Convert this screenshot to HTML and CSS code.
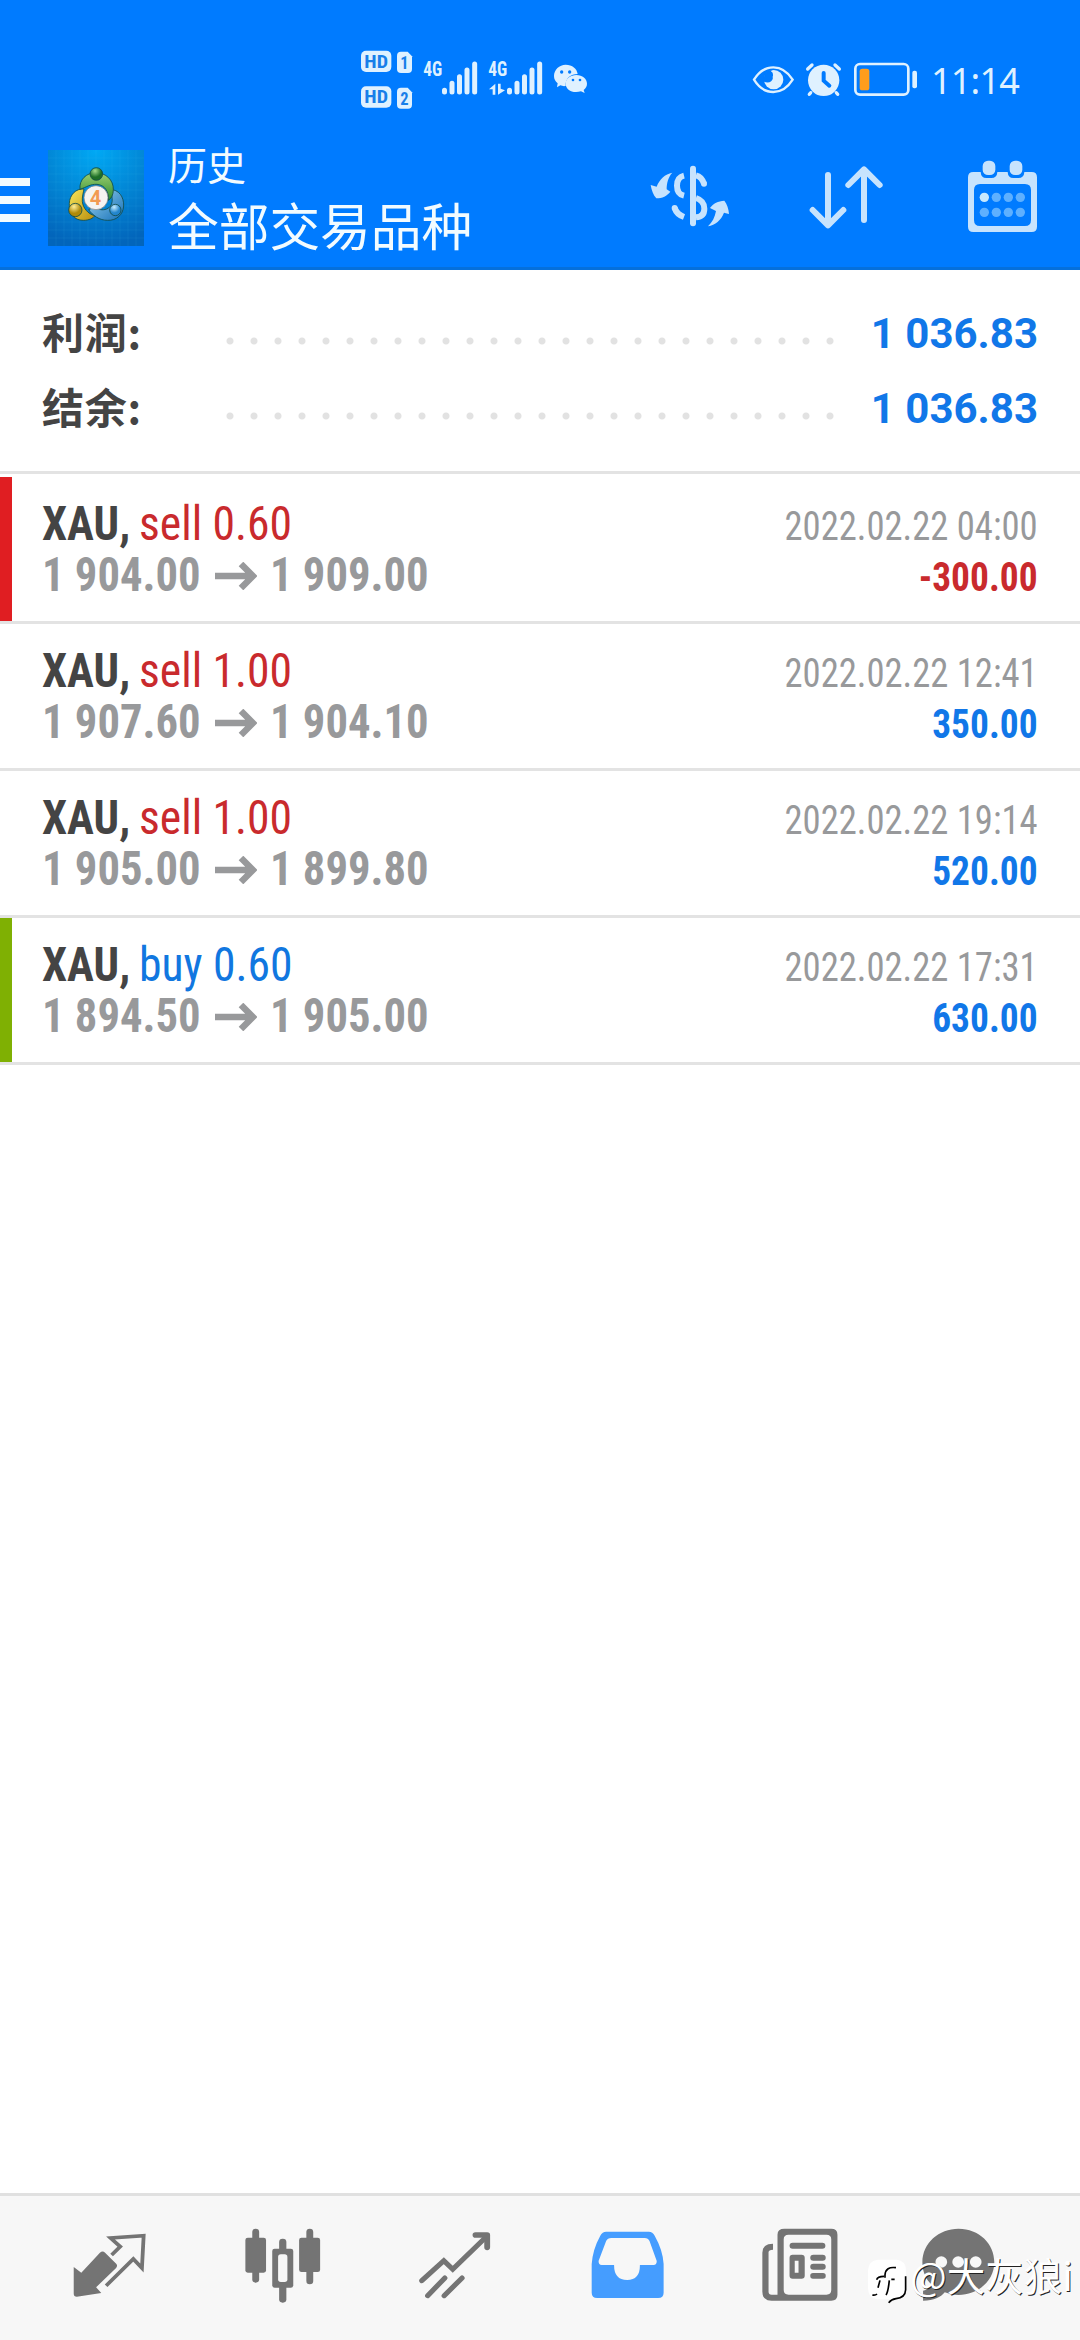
FILE: index.html
```html
<!DOCTYPE html>
<html lang="zh-CN">
<head>
<meta charset="utf-8">
<title>历史</title>
<link rel="stylesheet" href="styles.css">
</head>
<body>
<div class="screen">
  <header class="header">
    <div class="status">
      <svg class="status-signal" viewBox="60 55 690 190" width="230" height="63.33">
        <g fill="#dff1ff">
          <rect x="63" y="63" width="91" height="64" rx="15"/>
          <rect x="63" y="170" width="91" height="64" rx="15"/>
          <path d="M183 66h20l13 14v38q0 12-12 12h-21q-12 0-12-12V78q0-12 12-12z"/>
          <path d="M183 174h20l13 14v37q0 12-12 12h-21q-12 0-12-12v-39q0-12 12-12z"/>
        </g>
        <g class="badge-text">
          <text x="73" y="114" textLength="71" lengthAdjust="spacingAndGlyphs">HD</text>
          <text x="73" y="221" textLength="71" lengthAdjust="spacingAndGlyphs">HD</text>
          <text x="181" y="119" textLength="25" lengthAdjust="spacingAndGlyphs">1</text>
          <text x="181" y="226" textLength="25" lengthAdjust="spacingAndGlyphs">2</text>
        </g>
        <g class="net-text">
          <text x="250" y="140" textLength="57" lengthAdjust="spacingAndGlyphs">4G</text>
          <text x="445" y="140" textLength="57" lengthAdjust="spacingAndGlyphs">4G</text>
        </g>
        <g stroke="#dff1ff" stroke-width="15" stroke-linecap="round">
          <path d="M313.500 182v5M336 161v26M358.500 141v46M381 121v66M404 103v84"/>
          <path d="M508.500 182v5M531 161v26M553.500 141v46M576 121v66M599 103v84"/>
        </g>
        <path fill="#dff1ff" d="M447 179l19-17v33h-8v-16zM474 162h8v15l13 5-21 13z"/>
        <path fill="#dff1ff" d="M677 105c20 0 34 12 36 28-20 0-38 13-36 36-6 1-11 0-16-2l-10 6 2-12c-7-6-11-13-11-22 0-19 16-34 35-34z"/>
        <path fill="#dff1ff" d="M709 136c18 0 32 12 32 26 0 8-4 14-10 19l3 9-11-5c-26 8-46-6-46-23 0-14 14-26 32-26z"/>
        <g fill="#007bff"><circle cx="665" cy="127" r="5"/><circle cx="689" cy="127" r="5"/><circle cx="699" cy="151" r="4"/><circle cx="720" cy="151" r="4"/></g>
      </svg>
      <svg class="status-power" viewBox="36 66 498 108" width="166" height="36">
        <path d="M42 119Q65 82 100 82T158 119Q135 156 100 156T42 119z" fill="none" stroke="#dff1ff" stroke-width="7"/>
        <circle cx="101" cy="119" r="29" fill="#dff1ff"/>
        <path d="M77 98q7-7 18-8c-5 10-4 19 4 23-2 12-13 18-27 12-2-10 0-20 5-27z" fill="#007bff"/>
        <path d="M88 93q12 1 11 14-2 11-13 11-9-1-13-6" fill="#007bff"/>
        <circle cx="251" cy="121" r="47" fill="#dff1ff"/>
        <path d="M203 87l13-12M298 87l-13-12M212 158l-4 5M289 158l4 5" stroke="#dff1ff" stroke-width="10" stroke-linecap="round"/>
        <path d="M251 99v23l17 15" fill="none" stroke="#007bff" stroke-width="12" stroke-linecap="round"/>
        <rect x="346" y="72" width="159" height="92" rx="14" fill="none" stroke="#dff1ff" stroke-width="8"/>
        <rect x="359" y="86" width="29" height="65" rx="8" fill="#ff9d1c"/>
        <rect x="517" y="92" width="14" height="53" rx="6" fill="#dff1ff"/>
      </svg>
      <span class="clock">11:14</span>
    </div>
    <div class="toolbar">
      <svg class="menu" width="30" height="44" viewBox="0 0 30 44"><path d="M0 0h30v8H0zM0 18h30v8H0zM0 36h30v8H0z" fill="#f2fbff"/></svg>
      <svg class="logo" viewBox="144 60 288 288" width="96" height="96">
        <defs>
          <radialGradient id="sky" cx=".5" cy="0" r="1"><stop offset="0" stop-color="#00a9f5"/><stop offset=".5" stop-color="#0287d6"/><stop offset="1" stop-color="#0265bb"/></radialGradient>
          <linearGradient id="green" x2="0" y2="1"><stop stop-color="#9ccf72"/><stop offset="1" stop-color="#2c8a2e"/></linearGradient>
          <linearGradient id="gold" x2="1" y2="1"><stop stop-color="#f7e75b"/><stop offset="1" stop-color="#b98d0c"/></linearGradient>
          <linearGradient id="blue" x2="1" y2="1"><stop stop-color="#9bd4ef"/><stop offset="1" stop-color="#146fb8"/></linearGradient>
          <radialGradient id="greenBall" cx=".4" cy=".25"><stop stop-color="#a5dd8c"/><stop offset="1" stop-color="#1d6f26"/></radialGradient>
          <radialGradient id="goldBall" cx=".4" cy=".25"><stop stop-color="#fff09a"/><stop offset="1" stop-color="#b08a08"/></radialGradient>
          <radialGradient id="blueBall" cx=".4" cy=".25"><stop stop-color="#c7ecff"/><stop offset="1" stop-color="#2285cc"/></radialGradient>
        </defs>
        <path fill="url(#sky)" d="M144 60h288v288H144z"/>
        <path d="M168 60v288M192 60v288M216 60v288M240 60v288M264 60v288M288 60v288M312 60v288M336 60v288M360 60v288M384 60v288M408 60v288M144 84h288M144 108h288M144 132h288M144 156h288M144 180h288M144 204h288M144 228h288M144 252h288M144 276h288M144 300h288M144 324h288" stroke="#5cc4ff" stroke-opacity=".14" stroke-width="2"/>
        <g stroke-linejoin="round" stroke="#124c48" stroke-width="2.500">
          <path fill="url(#blue)" d="M328 178c30 0 44 24 43 50-2 27-22 44-48 43-25 0-44-14-57-32l20-9c10 9 20 12 34 7 19-7 22-33 8-59z"/>
          <path fill="url(#gold)" d="M252 177c-25-2-43 18-44 43-2 31 14 51 42 51 17 0 30-6 34-14-20-5-35-23-37-42-1-15 3-27 5-38z"/>
          <path fill="url(#green)" d="M240 178c-3-29 19-50 48-50s53 22 52 51c0 15-6 27-15 32 2-25-10-46-34-48-21-1-32 9-51 15z"/>
          <circle cx="289" cy="132" r="19" fill="url(#greenBall)"/>
          <circle cx="226" cy="240" r="20" fill="url(#goldBall)"/>
          <circle cx="346" cy="240" r="17" fill="url(#blueBall)"/>
        </g>
        <circle cx="288" cy="203" r="36" fill="#f5f3f2" stroke="#777" stroke-width="2"/>
        <text class="logo-digit" x="269" y="225">4</text>
      </svg>
      <div class="titles">
        <div class="subtitle">历史</div>
        <div class="title">全部交易品种</div>
      </div>
      <div class="actions">
        <svg class="act-currency" viewBox="90 75 240 189" width="80" height="63">
          <g fill="#c7e3fd">
            <rect x="210" y="77" width="18" height="182" rx="9"/>
            <path d="M157 98c-12 12-17 32-17 50l11 7c-10 13-24 20-42 20-9-9-14-24-17-40l18 5c8-22 25-38 47-42z"/>
            <path d="M264 259c13-12 21-28 24-46l-18-9c10-14 24-21 43-22 8 9 13 25 14 40l-15-4c-9 23-26 37-48 41z"/>
          </g>
          <g fill="none" stroke="#c7e3fd" stroke-width="18">
            <path d="M192 107Q171 112 171 137T192 167M228 106Q245 110 252 131M228 174Q253 182 253 206T228 232M164 204Q170 223 192 231"/>
            <path d="M252 131v.1M164 204v.1" stroke-linecap="round"/>
          </g>
        </svg>
        <svg class="act-sort" viewBox="564 75 228 195" width="76" height="65" fill="none" stroke="#c7e3fd" stroke-width="18" stroke-linecap="round" stroke-linejoin="round"><path d="M624 105v150M578 210l46 46 46-46M732 240V90M685 135l47-47 47 47"/></svg>
        <svg class="act-calendar" viewBox="1041 60 213 219" width="71" height="73">
          <path fill="#c7e3fd" fill-rule="evenodd" d="M1060 96h22q1 18 17 18h15q17 0 18-18h31q1 18 17 18h15q17 0 18-18h22q16 0 16 16v148q0 16-16 16h-175q-16 0-16-16V112q0-16 16-16zm20 36q-18 0-18 18v90q0 18 18 18h135q18 0 18-18v-90q0-18-18-18z"/>
          <rect x="1088" y="62" width="38" height="43" rx="16" fill="#c7e3fd"/><rect x="1169" y="62" width="38" height="43" rx="16" fill="#c7e3fd"/>
          <circle cx="1093" cy="172" r="14" fill="#c7e8fd"/>
          <g fill="#5eb0ff"><circle cx="1129" cy="172" r="14"/><circle cx="1165" cy="172" r="14"/><circle cx="1201" cy="172" r="14"/><circle cx="1093" cy="217" r="14"/><circle cx="1129" cy="217" r="14"/><circle cx="1165" cy="217" r="14"/><circle cx="1201" cy="217" r="14"/></g>
        </svg>
      </div>
    </div>
  </header>

  <section class="summary">
    <div class="sum-row"><span class="sum-label">利润:</span><span class="dots"></span><span class="sum-value">1 036.83</span></div>
    <div class="sum-row"><span class="sum-label">结余:</span><span class="dots"></span><span class="sum-value">1 036.83</span></div>
  </section>

  <main class="deals">
    <article class="deal stop">
      <div class="left"><div class="line"><b class="symbol">XAU,</b><span class="order sell">sell 0.60</span></div>
      <div class="line prices"><span class="price">1 904.00</span><svg class="arrow" viewBox="0 0 42 28"><path d="M0 14h38M26 2l12 12-12 12"/></svg><span class="price">1 909.00</span></div></div>
      <div class="right"><div class="date">2022.02.22 04:00</div><div class="profit loss">-300.00</div></div>
    </article>
    <article class="deal">
      <div class="left"><div class="line"><b class="symbol">XAU,</b><span class="order sell">sell 1.00</span></div>
      <div class="line prices"><span class="price">1 907.60</span><svg class="arrow" viewBox="0 0 42 28"><path d="M0 14h38M26 2l12 12-12 12"/></svg><span class="price">1 904.10</span></div></div>
      <div class="right"><div class="date">2022.02.22 12:41</div><div class="profit">350.00</div></div>
    </article>
    <article class="deal">
      <div class="left"><div class="line"><b class="symbol">XAU,</b><span class="order sell">sell 1.00</span></div>
      <div class="line prices"><span class="price">1 905.00</span><svg class="arrow" viewBox="0 0 42 28"><path d="M0 14h38M26 2l12 12-12 12"/></svg><span class="price">1 899.80</span></div></div>
      <div class="right"><div class="date">2022.02.22 19:14</div><div class="profit">520.00</div></div>
    </article>
    <article class="deal take">
      <div class="left"><div class="line"><b class="symbol">XAU,</b><span class="order buy">buy 0.60</span></div>
      <div class="line prices"><span class="price">1 894.50</span><svg class="arrow" viewBox="0 0 42 28"><path d="M0 14h38M26 2l12 12-12 12"/></svg><span class="price">1 905.00</span></div></div>
      <div class="right"><div class="date">2022.02.22 17:31</div><div class="profit">630.00</div></div>
    </article>
  </main>

  <nav class="tabs">
    <a class="tab"><svg viewBox="210 160 220 200" width="75.8" height="66.7" preserveAspectRatio="none">
      <path fill="#747474" d="M215 265l22 17 54-60q8-7 15 0l33 34q4 6-1 12l-58 58 15 17-71 11q-9 0-9-9z"/>
      <path fill="none" stroke="#747474" stroke-width="11" d="M325 229l25-25-28-26 96-7-5 97-25-27-79 80"/></svg></a>
    <a class="tab"><svg viewBox="705 145 225 225" width="77.500" height="75" preserveAspectRatio="none">
      <g fill="#747474"><rect x="729" y="147" width="20" height="162" rx="10"/><rect x="709" y="174" width="60" height="105" rx="7"/><rect x="886" y="147" width="20" height="167" rx="10"/><rect x="865" y="174" width="61" height="103" rx="7"/><rect x="807" y="177" width="21" height="192" rx="10"/><rect x="787" y="207" width="61" height="117" rx="7"/></g>
      <rect x="804" y="224" width="27" height="83" rx="8" fill="#f7f7f7"/></svg></a>
    <a class="tab"><svg viewBox="1210 150 215 210" width="74" height="70" preserveAspectRatio="none">
      <path fill="none" stroke="#747474" stroke-width="15" stroke-linecap="round" d="M1221 302l64-60 26 26 96-96M1238 347l50-53M1286 347l52-53"/><path fill="none" stroke="#747474" stroke-width="17" stroke-linecap="round" stroke-linejoin="round" d="M1377 165h34v37"/></svg></a>
    <a class="tab"><svg viewBox="145 150 215 210" width="74" height="70" preserveAspectRatio="none">
      <path fill="#459dff" fill-rule="evenodd" d="M189 155h124q11 0 17 12 24 44 26 85v86q0 16-16 16H163q-16 0-16-16v-86q3-44 25-85 6-12 17-12zm15 19q-11 0-15 9l-22 60q0 12 9 12h36q0 45 38 45t37-45h40q9 0 9-12l-21-60q-4-9-14-9z"/></svg></a>
    <a class="tab"><svg viewBox="645 145 220 220" width="75.8" height="73.3" preserveAspectRatio="none">
      <path fill="#747474" fill-rule="evenodd" d="M710 147h136q18 0 18 18v180q0 18-18 18H673q-27 0-27-27V219q0-27 31-27v18q-13 0-13 8v118q0 9 9 9h17V165q0-18 20-18zm12 18q-14 0-14 14v152q0 14 14 14h110q14 0 14-14V179q0-14-14-14z"/>
      <g fill="#747474"><rect x="725" y="189" width="104" height="18" rx="9"/><path fill-rule="evenodd" d="M734 225h26q9 0 9 9v54q0 9-9 9h-26q-9 0-9-9v-54q0-9 9-9zm6 18v36h11v-36z"/><rect x="785" y="225" width="45" height="18" rx="9"/><rect x="785" y="252" width="45" height="18" rx="9"/><rect x="785" y="280" width="45" height="17" rx="8"/></g></svg></a>
    <a class="tab tab-last"><svg viewBox="1105 145 215 220" width="74" height="73.3" preserveAspectRatio="none">
      <path fill="#747474" d="M1214 147c60 0 104 45 104 101s-48 98-104 98c-14 0-28-3-40-8-12 15-31 25-63 25v-30q18-3 26-17c-18-16-28-40-28-68 0-58 48-101 105-101z"/>
      <g fill="#f7f7f7"><circle cx="1164" cy="247" r="17"/><circle cx="1213" cy="247" r="17"/><circle cx="1264" cy="247" r="17"/></g></svg></a>
  </nav>
  <div class="watermark">
    <svg viewBox="24 28 118 134" width="39.300" height="44.700">
      <path fill="#fff" d="M54 30h56q28 2 28 32v56q-2 28-32 31H52q-26-3-28-32V62q2-30 30-32z"/>
      <path fill="none" stroke="#000" stroke-width="5" d="M137 80v40q-1 24-29 27-14 2-22 12M108 54c-20-3-32 4-33 22v8M50 90c2-8 9-10 22-10M94 89h10M60 92l-6 22M37 136q9 2 14-3M88 92c-2 20-4 36-10 44"/>
    </svg>
    <span>@大灰狼i</span>
  </div>
</div>
</body>
</html>
```
FILE: styles.css
```css
* { box-sizing: border-box; }
body { margin: 0; background: #fff; }
svg { display: block; flex: none; }

.screen {
  position: relative;
  display: flex;
  flex-direction: column;
  width: 1080px;
  height: 2340px;
  background: #fff;
  font-family: Roboto, "Noto Sans CJK SC", sans-serif;
}

.header {
  height: 270px;
  background: #007bff;
  border-bottom: 3px solid #0570dc;
}
.status { display: flex; height: 130px; }
.status-signal { margin: 48px 0 0 360px; }
.status-power { margin: 62px 0 0 162px; }
.badge-text { font: 700 54px "Roboto Condensed", Roboto, sans-serif; fill: #187fe9; }
.net-text { font: 700 58px "Roboto Condensed", Roboto, sans-serif; fill: #dff1ff; }
.clock {
  margin: 56px 0 0 13px;
  font: 400 36px/50px "Noto Sans", sans-serif;
  letter-spacing: -0.8px;
  color: #dff1ff;
}

.toolbar { display: flex; height: 137px; }
.menu { margin-top: 48px; }
.logo { margin: 20px 0 0 18px; }
.logo-digit { font: 700 60px Roboto, sans-serif; fill: #f29a52; }
.titles { margin: 5px 0 0 24px; color: #f2fbff; font-family: "Noto Sans CJK SC", sans-serif; white-space: nowrap; }
.subtitle { font-size: 39px; line-height: 56px; }
.title { font-size: 50.700px; line-height: 66px; }
.actions { display: flex; margin-left: auto; padding-right: 42px; }
.act-currency { margin-top: 35px; }
.act-sort { margin: 35px 0 0 78px; }
.act-calendar { margin: 30px 0 0 83px; }

.summary {
  height: 204px;
  padding: 26px 42px 0 42px;
  border-bottom: 3px solid #e3e3e3;
}
.sum-row { display: flex; height: 75px; line-height: 75px; font-size: 42px; font-weight: 700; }
.sum-label {
  width: 176px;
  margin-top: -3px;
  color: #444;
  font-family: "Noto Sans CJK SC", sans-serif;
  letter-spacing: 0.8px;
}
.dots {
  width: 624px;
  height: 24px;
  margin-top: 33px;
  background: radial-gradient(circle at center, #e2e2e2 3px, transparent 4px) 0 0 / 24px 24px;
}
.sum-value { margin-left: auto; color: #1177e8; }

.deals { padding-top: 3px; }
.deal {
  display: flex;
  justify-content: space-between;
  height: 147px;
  padding: 21px 42px 0 30px;
  border-left: 12px solid transparent;
  font-family: "Roboto Condensed", Roboto, sans-serif;
  background: linear-gradient(#e3e3e3, #e3e3e3) -12px 100% / 1100px 3px no-repeat border-box;
}
.stop { border-image: linear-gradient(#e01e22 144px, #e3e3e3 144px) 0 0 0 12; }
.take { border-image: linear-gradient(#7fb003 144px, #e3e3e3 144px) 0 0 0 12; }
.line { display: flex; height: 51px; font-size: 48px; line-height: 51px; color: #444; white-space: nowrap; }
.symbol { width: 97px; transform: scaleX(0.935); transform-origin: left; }
.order { transform: scaleX(0.95); transform-origin: left; }
.sell { color: #c92a2d; }
.buy { color: #1177e0; }
.prices { color: #98999b; font-weight: 700; }
.price { width: 159px; transform: scaleX(0.93); transform-origin: left; }
.arrow { width: 42px; height: 28px; margin: 13px 13px 0 14px; fill: none; stroke: #98999b; stroke-width: 6.5; }
.right { padding-top: 3px; text-align: right; font-size: 40px; line-height: 51px; white-space: nowrap; }
.date { color: #98999b; transform: scaleX(0.915); transform-origin: right; }
.profit { color: #1177e8; font-weight: 700; transform: scaleX(0.935); transform-origin: right; }
.loss { color: #c92a2d; }

.tabs {
  display: flex;
  height: 147px;
  margin-top: auto;
  padding-left: 24px;
  background: #f7f7f7;
  border-top: 3px solid #e0e0e0;
}
.tab { display: flex; justify-content: center; align-items: center; width: 172.500px; height: 138px; }
.tab-last { width: 142px; }

.watermark {
  position: absolute;
  left: 868px;
  top: 2259px;
  display: flex;
  color: #fff;
  font: 400 38.500px/46px "Noto Sans CJK SC", sans-serif;
  text-shadow: 1px 1px 0 #222;
  white-space: nowrap;
}
.watermark span { margin: -8px 0 0 3px; }
```
